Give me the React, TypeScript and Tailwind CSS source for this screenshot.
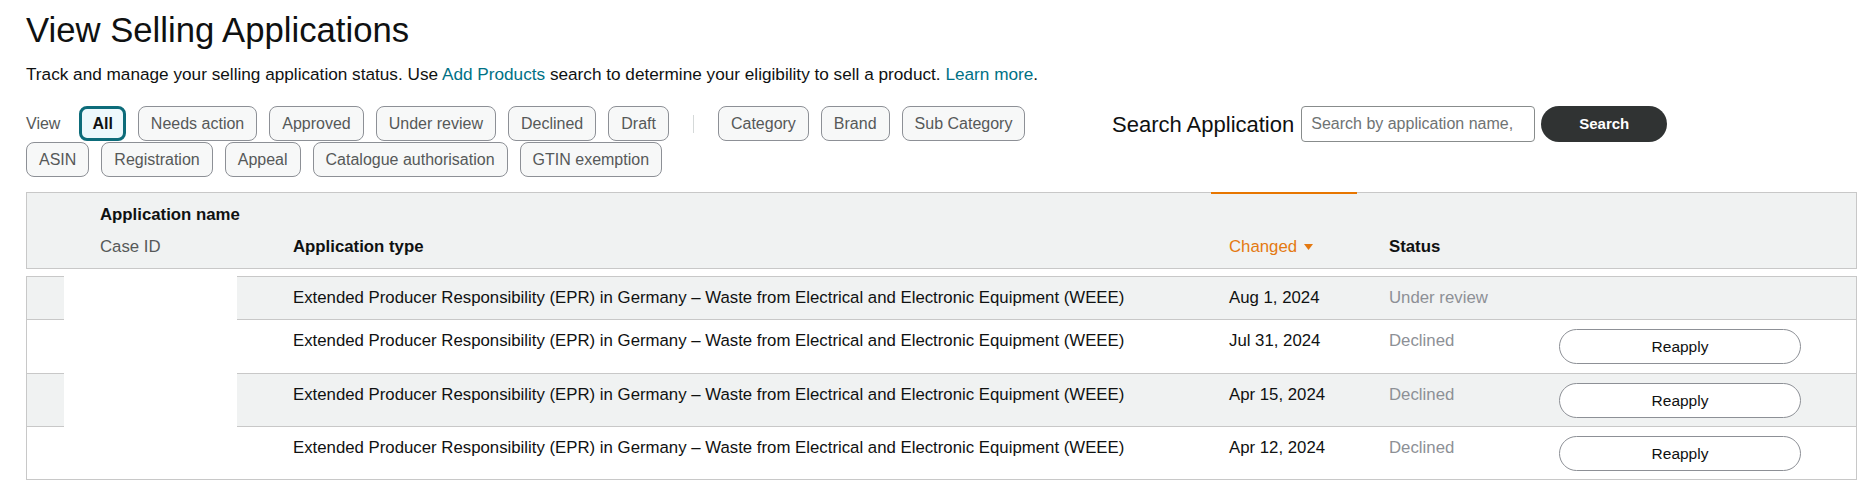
import React from "react";

const statusChips = ["Needs action", "Approved", "Under review", "Declined", "Draft"];
const typeChips = ["Category", "Brand", "Sub Category", "ASIN", "Registration", "Appeal", "Catalogue authorisation", "GTIN exemption"];

const appType =
	"Extended Producer Responsibility (EPR) in Germany \u2013 Waste from Electrical and Electronic Equipment (WEEE)";

const rows = [
	{date: "Aug 1, 2024", status: "Under review", reapply: false, shaded: true, pad: "pt-[9px] pb-[10px]"},
	{date: "Jul 31, 2024", status: "Declined", reapply: true, shaded: false, pad: "py-[9px]"},
	{date: "Apr 15, 2024", status: "Declined", reapply: true, shaded: true, pad: "pt-[9px] pb-[8px]"},
	{date: "Apr 12, 2024", status: "Declined", reapply: true, shaded: false, pad: "pt-[9px] pb-[8px]"},
];

function Chip({label}: {label: string}) {
	return (
		<button className="h-[35px] px-[12px] rounded-[8px] border border-[#8d9096] bg-[#f7f8f8] text-[16px] text-[#565959] leading-none">
			{label}
		</button>
	);
}

export default function App() {
	return (
		<div className="min-h-screen bg-white pl-[26px] pr-[9px] text-[#0f1111]"
			 style={{fontFamily: '"Liberation Sans", Arial, sans-serif'}}>
			<h1 className="pt-[10px] text-[34.7px] leading-[41px] font-normal">View Selling Applications</h1>
			<p className="mt-[12px] text-[17.2px] leading-[22px]">
				Track and manage your selling application status. Use{" "}
				<a className="text-[#007185]">Add Products</a> search to determine your eligibility to sell a product.{" "}
				<a className="text-[#007185]">Learn more</a>.
			</p>

			<div className="flex items-start mt-[21px]">
				<div className="w-[1060px] shrink-0 flex flex-wrap items-center gap-x-[12px] gap-y-[1px]">
					<span className="text-[16px] text-[#565959] mr-[7px]">View</span>
					<button className="h-[35px] px-[10px] rounded-[8px] border-[3px] border-[#0d6c7a] bg-[#edf8fc] text-[16px] font-bold leading-none">
						All
					</button>
					{statusChips.map((c) => <Chip key={c} label={c}/>)}
					<span className="px-[12px] flex items-center">
						<span className="block w-[1px] h-[18px] bg-[#d5d9d9]"/>
					</span>
					{typeChips.map((c) => <Chip key={c} label={c}/>)}
				</div>
				<div className="ml-[26px] flex items-center h-[36px]">
					<span className="text-[22px]">Search Application</span>
					<input
						className="ml-[7px] w-[234px] h-[36px] px-[9px] rounded-[4px] border border-[#888c8c] text-[16px] placeholder:text-[#6f7373] outline-none"
						placeholder="Search by application name,"
					/>
					<button className="ml-[6px] w-[126px] h-[36px] rounded-full bg-[#303333] text-white text-[15px] font-bold">
						Search
					</button>
				</div>
			</div>

			<div className="relative mt-[15px] border border-[#c8c8c8] bg-[#f0f2f2] pt-[11px] pb-[10px] grid grid-cols-[73px_193px_936px_160px_1fr] gap-y-[10px] text-[16.8px] leading-[22px]">
				<div className="absolute top-[-1px] left-[1184px] w-[146px] h-[2px] bg-[#e77600]"/>
				<div/>
				<div className="col-span-4 font-bold">Application name</div>
				<div/>
				<div className="text-[#565959]">Case ID</div>
				<div className="font-bold">Application type</div>
				<div className="text-[#e47911] flex items-center gap-[7px]">
					Changed
					<svg width="9" height="6" viewBox="0 0 9 6"><path d="M0 0h9L4.5 6z" fill="#e47911"/></svg>
				</div>
				<div className="font-bold">Status</div>
			</div>

			<div className="relative mt-[7px] border border-[#c8c8c8] text-[16.8px] leading-[22px]">
				<div className="absolute top-[-1px] left-[37px] w-[173px] h-[151px] bg-white z-10"/>
				{rows.map((r, i) => (
					<div key={i}
						 className={`grid grid-cols-[73px_193px_936px_160px_170px_242px] items-start ${r.pad} ${r.shaded ? "bg-[#f0f2f2]" : "bg-white"} ${i < rows.length - 1 ? "border-b border-[#c8c8c8]" : ""}`}>
						<div/>
						<div/>
						<div className="pt-[1px]">{appType}</div>
						<div className="pt-[1px]">{r.date}</div>
						<div className="pt-[1px] text-[#8d9096]">{r.status}</div>
						<div>
							{r.reapply && (
								<button className="w-[242px] h-[35px] rounded-full border border-[#8d9096] bg-white text-[15.5px]">
									Reapply
								</button>
							)}
						</div>
					</div>
				))}
			</div>
		</div>
	);
}
